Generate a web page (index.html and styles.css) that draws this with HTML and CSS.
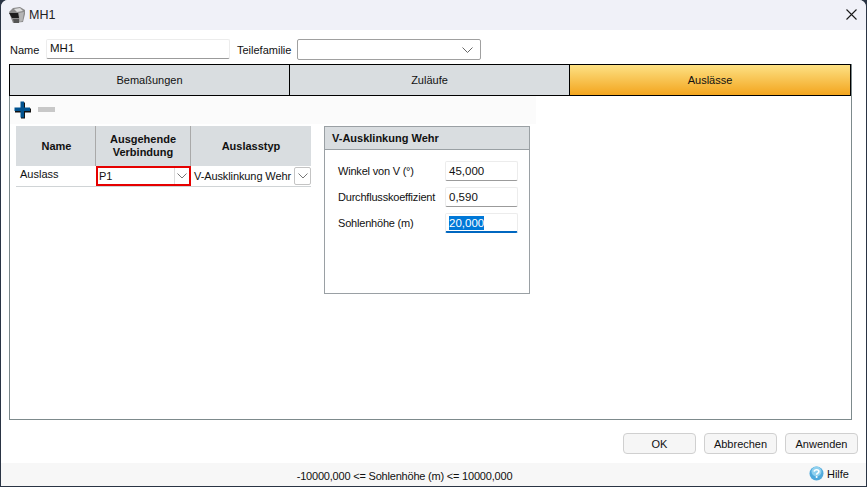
FILE: index.html
```html
<!DOCTYPE html>
<html lang="de">
<head>
<meta charset="utf-8">
<title>MH1</title>
<link rel="stylesheet" href="styles.css">
</head>
<body>
<div class="window">
  <header class="titlebar">
    <svg class="app-icon" width="18" height="18" viewBox="0 0 18 18">
      <path d="M1 6 L5 2 L12 1 L17 4 L17 8 L15 16 L5 17 L3 12 Z" fill="#8a8a8a"/>
      <path d="M6 3 L12 2 L15 5 L9 6 Z" fill="#dcdcdc"/>
      <path d="M1 7 L10 7 L11 12 L4 12 Z" fill="#1c1c1c"/>
      <path d="M11 7 L16 6 L14.5 15 L11.5 16 Z" fill="#b5b5b5"/>
      <path d="M5 13 L11 13 L11 17 L6 17 Z" fill="#555"/>
    </svg>
    <span class="title">MH1</span>
    <svg class="close" width="11" height="11" viewBox="0 0 11 11"><path d="M0.5 0.5 L10.5 10.5 M10.5 0.5 L0.5 10.5" stroke="#1a1a1a" stroke-width="1.1" fill="none"/></svg>
  </header>
  <main class="body">
    <div class="name-row">
      <label class="lbl lbl-name">Name</label>
      <div class="input name-input">MH1</div>
      <label class="lbl lbl-family">Teilefamilie</label>
      <div class="family-select">
        <svg width="11" height="6" viewBox="0 0 11 6"><path d="M0.5 0.5 L5.5 5.5 L10.5 0.5" stroke="#666" fill="none"/></svg>
      </div>
    </div>
    <div class="panel">
      <div class="tabs">
        <div class="tab">Bemaßungen</div>
        <div class="tab">Zuläufe</div>
        <div class="tab tab-active">Auslässe</div>
      </div>
      <div class="toolbar">
        <svg width="17" height="18" viewBox="0 0 17 18">
          <path d="M7 1.5 H11 V7.5 H17 V11.5 H11 V17.5 H7 V11.5 H1 V7.5 H7 Z" fill="#111"/>
          <path d="M6.5 0.5 H10 V6.5 H16 V10 H10 V16.5 H6.5 V10 H0.5 V6.5 H6.5 Z" fill="#00528f"/>
        </svg>
        <span class="minus"></span>
      </div>
      <div class="content">
        <div class="grid">
          <div class="head h1">Name</div>
          <div class="head h2">Ausgehende<br>Verbindung</div>
          <div class="head h3">Auslasstyp</div>
          <div class="cell c1">Auslass</div>
          <div class="cell c2"><span>P1</span><i class="drop"><svg width="10" height="6" viewBox="0 0 10 6"><path d="M0.5 0.5 L5 5 L9.5 0.5" stroke="#777" fill="none"/></svg></i></div>
          <div class="cell c3"><span>V-Ausklinkung Wehr</span><i class="drop boxed"><svg width="10" height="6" viewBox="0 0 10 6"><path d="M0.5 0.5 L5 5 L9.5 0.5" stroke="#777" fill="none"/></svg></i></div>
        </div>
        <section class="props">
          <h2 class="props-title">V-Ausklinkung Wehr</h2>
          <div class="props-body">
            <div class="prop"><span>Winkel von V (°)</span><div class="input num">45,000</div></div>
            <div class="prop"><span>Durchflusskoeffizient</span><div class="input num">0,590</div></div>
            <div class="prop"><span>Sohlenhöhe (m)</span><div class="input num focus"><b>20,000</b></div></div>
          </div>
        </section>
      </div>
    </div>
    <div class="buttons">
      <button class="btn">OK</button>
      <button class="btn">Abbrechen</button>
      <button class="btn">Anwenden</button>
    </div>
  </main>
  <footer class="status">
    <span class="msg">-10000,000 &lt;= Sohlenhöhe (m) &lt;= 10000,000</span>
    <span class="help">
      <svg width="15" height="15" viewBox="0 0 15 15">
        <circle cx="7.5" cy="7.5" r="7" fill="#4fa9dc"/>
        <circle cx="7.5" cy="5.5" r="5" fill="#8fd0ee"/>
        <path d="M5.2 5.6 C5.4 3.2 9.9 3.2 9.9 5.6 C9.9 7.2 7.6 7 7.6 8.8" stroke="#fff" stroke-width="1.6" fill="none"/>
        <circle cx="7.6" cy="11" r="1" fill="#fff"/>
      </svg>
      Hilfe
    </span>
  </footer>
</div>
</body>
</html>
```
FILE: styles.css
```css
* { box-sizing: border-box; }
html, body { margin: 0; height: 100%; }
body {
  background: #2a3444;
  font-family: "Liberation Sans", Arial, sans-serif;
  font-size: 11px;
  color: #111;
  overflow: hidden;
}
.window {
  width: 865px;
  height: 486px;
  margin-left: 1px;
  background: #fff;
  border-radius: 7px 7px 0 0;
  display: flex;
  flex-direction: column;
  overflow: hidden;
}
.titlebar {
  height: 30px;
  flex: none;
  background: #f0f1f8;
  display: flex;
  align-items: center;
  padding: 0 9px 1px 7px;
}
.app-icon { flex: none; }
.title { margin-left: 3px; font-size: 12.5px; color: #222; flex: 1; }
.body {
  flex: 1;
  display: flex;
  flex-direction: column;
  padding: 9px 14px 0 8px;
  min-height: 0;
}
.name-row {
  height: 21px;
  display: flex;
  align-items: center;
  flex: none;
}
.lbl { font-size: 11px; }
.lbl-name { width: 37px; padding-left: 1px; }
.lbl-family { margin-left: 7px; width: 60px; }
.input {
  background: #fff;
  border: 1px solid #ececec;
  border-bottom: 1px solid #9b9b9b;
  border-radius: 2px;
  font-size: 11.5px;
  padding: 1px 3px;
}
.name-input { width: 184px; height: 20px; margin-top: -2px; line-height: 15px; }
.family-select {
  width: 184px;
  height: 21px;
  border: 1px solid #a0a0a0;
  border-radius: 2px;
  display: flex;
  align-items: center;
  justify-content: flex-end;
  padding-right: 3px;
}
.family-select svg { margin-right: 4px; }
.panel {
  margin-top: 4px;
  height: 356px;
  flex: none;
  border: 1px solid #7d8a8c;
  border-top: 0;
  display: flex;
  flex-direction: column;
}
.tabs {
  display: grid;
  grid-template-columns: 280px 280px 1fr;
  height: 32px;
  flex: none;
  border: 1px solid #000;
  margin: 0 -1px;
  width: 842px;
}
.tab {
  display: flex;
  align-items: center;
  justify-content: center;
  background: #d9dde0;
  border-right: 1px solid #000;
  font-size: 11px;
}
.tab:last-child { border-right: 0; }
.tab-active { background: linear-gradient(#fde184, #f3a51e); }
.toolbar {
  width: 526px;
  height: 28px;
  background: #fbfbfb;
  display: flex;
  align-items: center;
  gap: 7px;
  padding: 0 0 0 4px;
  flex: none;
}
.minus { width: 17px; height: 5px; background: #c8c8c8; margin-top: -1px; }
.content {
  display: flex;
  align-items: flex-start;
  padding: 2px 0 0 6px;
}
.grid {
  display: grid;
  grid-template-columns: 80px 95px 120px;
  grid-template-rows: 40px 20px;
  width: 295px;
  border-bottom: 1px solid #d0d4d6;
}
.head {
  background: #d9dde0;
  border-right: 1px solid #a9a9a9;
  font-weight: bold;
  font-size: 11px;
  line-height: 13px;
  display: flex;
  align-items: center;
  justify-content: center;
  text-align: center;
}
.h1 { padding-left: 2px; }
.h3 { border-right: 0; }
.cell {
  display: flex;
  align-items: center;
  font-size: 11px;
  white-space: nowrap;
  position: relative;
}
.c1 { padding: 0 0 4px 4px; }
.c2 { border: 2px solid #e60000; padding-left: 1px; justify-content: space-between; }
.c2 span, .c3 span { margin-top: -1px; }
.c3 { padding-left: 3px; justify-content: space-between; letter-spacing: -0.1px; }
.drop { display: flex; align-items: center; justify-content: center; width: 15px; height: 100%; border-left: 1px solid #dcdcdc; font-style: normal; }
.drop.boxed { width: 17px; height: 18px; border: 1px solid #c4c4c4; border-radius: 2px; flex: none; }
.props {
  width: 206px;
  height: 168px;
  margin: 0 0 0 13px;
  border: 1px solid #9aa0a4;
}
.props-title {
  margin: 0;
  height: 23px;
  background: #d9dde0;
  border-bottom: 1px solid #9aa0a4;
  font-size: 11px;
  font-weight: bold;
  padding-left: 7px;
  line-height: 22px;
}
.props-body {
  padding: 11px 11px 0 13px;
  display: flex;
  flex-direction: column;
  gap: 6px;
}
.prop {
  display: flex;
  justify-content: space-between;
  align-items: center;
  height: 20px;
  font-size: 11px;
}
.prop span { letter-spacing: -0.2px; }
.num { width: 73px; height: 20px; padding: 1px 3px; line-height: 16px; }
.focus { border-bottom: 2px solid #0067c0; }
.focus b { background: #0078d7; color: #fff; font-weight: normal; display: inline-block; line-height: 14px; }
.buttons {
  margin-top: 13px;
  display: flex;
  justify-content: flex-end;
  gap: 8px;
  flex: none;
  margin-right: -6px;
}
.btn {
  width: 73px;
  height: 21px;
  background: #f6f6f6;
  border: 1px solid #d0d0d0;
  border-radius: 4px;
  font-family: inherit;
  font-size: 11px;
  color: #111;
  padding: 0;
}
.status {
  height: 23px;
  flex: none;
  background: #f7f7f7;
  display: flex;
  align-items: center;
  position: relative;
  justify-content: center;
  padding-top: 3px;
}
.msg { margin-right: 58px; font-size: 11px; letter-spacing: -0.2px; }
.help {
  position: absolute;
  right: 17px;
  top: 3px;
  display: flex;
  align-items: center;
  gap: 3px;
  font-size: 11px;
}
```
